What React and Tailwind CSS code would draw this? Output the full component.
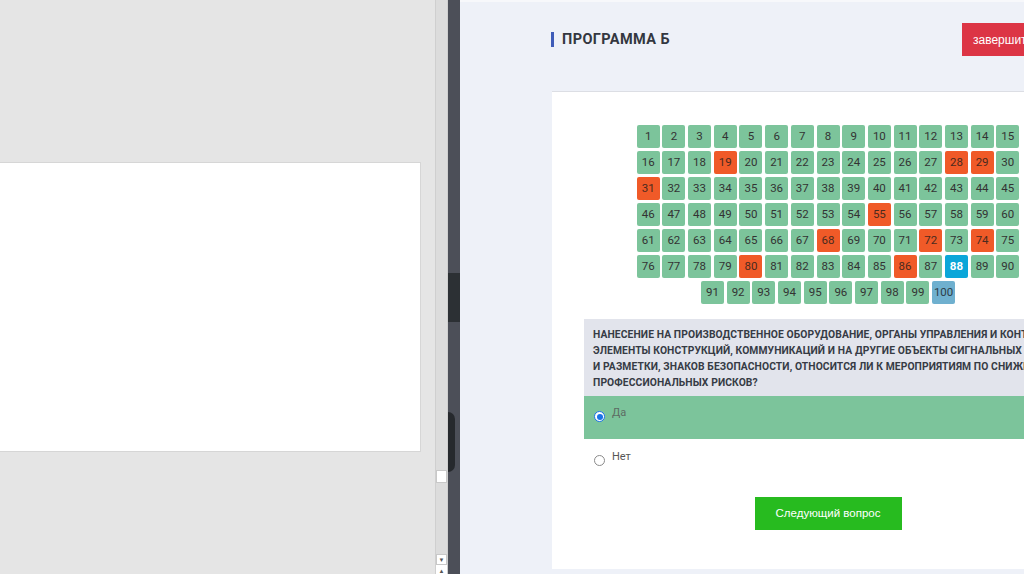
import React from 'react';

const RED = [19, 28, 29, 31, 55, 68, 72, 74, 80, 86];

function Cell({ n }) {
  let cls = 'bg-[#7cc49b] text-[#333]';
  if (RED.includes(n)) cls = 'bg-[#f05a28] text-[#4a2a1f]';
  if (n === 88) cls = 'bg-[#0aa6d9] text-white font-bold';
  if (n === 100) cls = 'bg-[#6fb0cf] text-[#2d3e4a]';
  return (
    <div className={`w-[23px] h-[23px] rounded-[2px] flex items-center justify-center text-[11.5px] ${cls}`}>
      {n}
    </div>
  );
}

function Radio({ checked }) {
  if (checked) {
    return (
      <span className="w-[11px] h-[11px] rounded-full border border-[#1a73e8] bg-white flex items-center justify-center shrink-0">
        <span className="w-[6px] h-[6px] rounded-full bg-[#1a73e8]" />
      </span>
    );
  }
  return <span className="block w-[11px] h-[11px] rounded-full border border-[#8a8a8a] bg-white shrink-0" />;
}

export default function App() {
  const nums = Array.from({ length: 100 }, (_, i) => i + 1);
  return (
    <div className="flex w-[1024px] h-[574px] overflow-hidden font-['Roboto',sans-serif]">
      {/* left slide panel */}
      <div className="w-[435px] shrink-0 bg-[#e5e5e5] pt-[162px]">
        <div className="w-[421px] h-[290px] bg-white border border-[#d6d6d6] border-l-0" />
      </div>

      {/* scrollbar */}
      <div className="w-[13px] shrink-0 bg-[#dcdcdc] border-x border-[#cfcfcf] flex flex-col items-center">
        <div className="h-[470px]" />
        <div className="w-[11px] h-[13px] bg-white border border-[#c8c8c8]" />
        <div className="flex-1" />
        <div className="w-[11px] h-[11px] bg-white border border-[#c8c8c8] flex items-center justify-center text-[6px] text-[#555] leading-none">▼</div>
        <div className="w-[11px] h-[9px] bg-white flex items-end justify-center text-[6px] text-[#555] leading-none">▲</div>
      </div>

      {/* dark divider */}
      <div className="w-[12px] shrink-0 bg-[#4c4f58] flex flex-col relative">
        <div className="h-[273px]" />
        <div className="h-[49px] bg-[#2c3034]" />
        <div className="absolute left-0 top-[412px] w-[7px] h-[60px] rounded-r-full bg-[#26292d]" />
      </div>

      {/* right app panel */}
      <div className="flex-1 min-w-0 bg-[#eef1f8] border-t-2 border-[#f7f8fb] pl-[92px] overflow-hidden">
        <div className="w-[552px]">
          <div className="flex items-center justify-between pt-[20px] h-[55px]">
            <div className="flex items-center gap-[8px] -ml-[1px]">
              <span className="w-[3px] h-[15px] bg-[#3f5cb8]" />
              <span className="text-[14.5px] font-bold text-[#333740] tracking-[0.4px]">ПРОГРАММА Б</span>
            </div>
            <button className="h-[33px] w-[142px] bg-[#dc3545] text-white text-[12px] text-left pl-[11px] font-['Liberation_Sans',sans-serif]">
              завершить тест
            </button>
          </div>

          <div className="mt-[34px] bg-white border-t border-[#dcdee4] px-[32px] pt-[33px] h-[478px]">
            <div className="w-[383px] mx-auto flex flex-wrap justify-center gap-x-[2.7px] gap-y-[3px]">
              {nums.map((n) => (
                <Cell key={n} n={n} />
              ))}
            </div>

            <div className="mt-[15px] bg-[#e2e4ec] pl-[9px] pt-[8px] pb-[5px] text-[10.3px] font-bold leading-[16px] text-[#363b45] whitespace-nowrap overflow-hidden tracking-[0.1px]">
              НАНЕСЕНИЕ НА ПРОИЗВОДСТВЕННОЕ ОБОРУДОВАНИЕ, ОРГАНЫ УПРАВЛЕНИЯ И КОНТРОЛЯ,
              <br />
              ЭЛЕМЕНТЫ КОНСТРУКЦИЙ, КОММУНИКАЦИЙ И НА ДРУГИЕ ОБЪЕКТЫ СИГНАЛЬНЫХ ЦВЕТОВ
              <br />
              И РАЗМЕТКИ, ЗНАКОВ БЕЗОПАСНОСТИ, ОТНОСИТСЯ ЛИ К МЕРОПРИЯТИЯМ ПО СНИЖЕНИЮ УРОВНЕЙ
              <br />
              ПРОФЕССИОНАЛЬНЫХ РИСКОВ?
            </div>

            <div className="h-[43px] bg-[#7cc49b] flex items-start pl-[10px] pt-[11px] gap-[7px]">
              <span className="mt-[4px]"><Radio checked /></span>
              <span className="text-[11px] text-[#5d6b63] leading-[12px]">Да</span>
            </div>

            <div className="h-[43px] flex items-start pl-[10px] pt-[12px] gap-[7px]">
              <span className="mt-[4px]"><Radio /></span>
              <span className="text-[11px] text-[#555] leading-[12px]">Нет</span>
            </div>

            <div className="flex justify-center mt-[15px]">
              <button className="w-[147px] h-[33px] bg-[#27bb1f] text-white text-[11.5px] font-['Liberation_Sans',sans-serif]">
                Следующий вопрос
              </button>
            </div>
          </div>
        </div>
      </div>
    </div>
  );
}
